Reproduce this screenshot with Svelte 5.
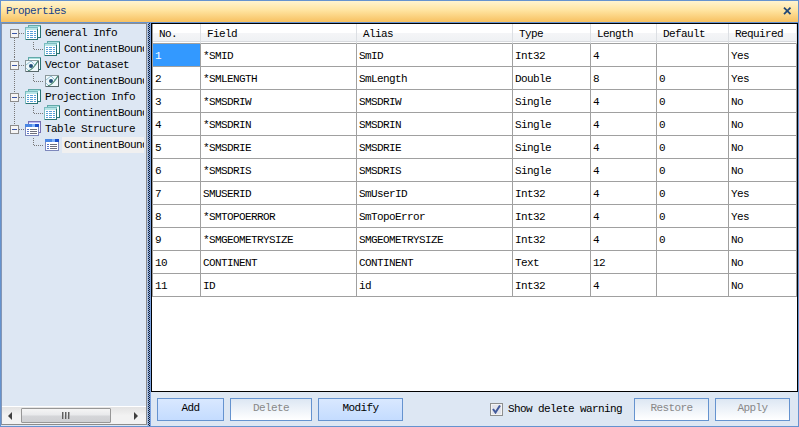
<script>
  const tree = [
    { label: 'General Info', icon: 'grid' },
    { label: 'Vector Dataset', icon: 'vector' },
    { label: 'Projection Info', icon: 'grid' },
    { label: 'Table Structure', icon: 'table', selected: true }
  ];
  const columns = ['No.', 'Field', 'Alias', 'Type', 'Length', 'Default', 'Required'];
  const rows = [
    ['1', '*SMID', 'SmID', 'Int32', '4', '', 'Yes'],
    ['2', '*SMLENGTH', 'SmLength', 'Double', '8', '0', 'Yes'],
    ['3', '*SMSDRIW', 'SMSDRIW', 'Single', '4', '0', 'No'],
    ['4', '*SMSDRIN', 'SMSDRIN', 'Single', '4', '0', 'No'],
    ['5', '*SMSDRIE', 'SMSDRIE', 'Single', '4', '0', 'No'],
    ['6', '*SMSDRIS', 'SMSDRIS', 'Single', '4', '0', 'No'],
    ['7', 'SMUSERID', 'SmUserID', 'Int32', '4', '0', 'Yes'],
    ['8', '*SMTOPOERROR', 'SmTopoError', 'Int32', '4', '0', 'Yes'],
    ['9', '*SMGEOMETRYSIZE', 'SMGEOMETRYSIZE', 'Int32', '4', '0', 'No'],
    ['10', 'CONTINENT', 'CONTINENT', 'Text', '12', '', 'No'],
    ['11', 'ID', 'id', 'Int32', '4', '', 'No']
  ];
  let warn = $state(true);
</script>

{#snippet icon(kind, stacked)}
  <svg class="icon" width="16" height="16" viewBox="0 0 16 16" shape-rendering="crispEdges">
    {#if kind === 'table'}
      {#if stacked}
        <rect x="3.5" y="0.5" width="12" height="11" fill="#f4f4ff" stroke="#7770b5" />
        <rect x="4" y="1" width="11" height="1" fill="#b9b9f4" />
      {/if}
      <g transform={stacked ? 'translate(0 1)' : 'translate(1 0)'}>
        <rect x="0.5" y="2.5" width="13" height="11" fill="#fff" stroke="#7d88bc" />
        <rect x="0" y="2" width="14" height="3" fill="#4a86e4" />
        <rect x="7" y="2" width="3" height="3" fill="#7fb2fa" />
        <rect x="10" y="2" width="4" height="3" fill="#1c50c8" />
        <path d="M2 7.5h2M2 9.5h2M2 11.5h2" stroke="#5c78c8" />
        <path d="M5 7.5h7M5 9.5h7M5 11.5h7" stroke="#6d6f7c" />
      </g>
    {:else}
      {#if kind === 'grid' || stacked}
        <rect x="3.5" y="0.5" width="12" height="12" fill="#f5ffff" stroke="#62a9a9" />
        <path d="M15.5 1v12M13 12.5h3" stroke="#2b7474" />
        <path d="M4 1.5h11" stroke="#a6dddd" />
      {/if}
      {#if kind === 'grid'}
        <rect x="0.5" y="2.5" width="12" height="12" fill="#fff" stroke="#7bbcc0" />
        <path d="M12.500 4v11M1 14.500h12" stroke="#2b7474" />
        <rect x="1" y="3" width="11" height="2" fill="#b7e5e6" />
        <path d="M2 6.5h2M5 6.5h3M9 6.5h2M2 8.5h2M5 8.5h3M9 8.5h2M2 10.5h2M5 10.5h3M9 10.5h2M2 12.5h2M5 12.5h3M9 12.5h2" stroke="#5aa0d8" />
      {:else}
        <g transform={stacked ? 'translate(0 0)' : 'translate(1 -1)'} shape-rendering="auto">
          <rect x="0.5" y="3.5" width="13" height="11" fill="#eff8fb" stroke="#8b989c" />
          <path d="M1 8l5-4 4 4 3-4M1 11l3 3" fill="none" stroke="#93c0d4" />
          <circle cx="6" cy="9" r="2" fill="#245078" />
          <path d="M3 14C7 13 10 9 13 4" fill="none" stroke="#4c8c74" stroke-width="1.2" />
          <path d="M13.500 4v11M1 14.500h13" stroke="#58686c" />
        </g>
      {/if}
    {/if}
  </svg>
{/snippet}

<div class="window">
  <header>
    <span>Properties</span>
    <svg width="9" height="8" viewBox="0 0 9 8"><path d="M1 .7l6.500 6.500M7.500 .7L1 7.200" stroke="#214777" stroke-width="1.8" /></svg>
  </header>
  <div class="body">
    <aside>
      <div class="tree">
        {#each tree as node, i}
          <div class="node">
            <svg class="branch" width="16" height="32" viewBox="0 0 16 32" shape-rendering="crispEdges">
              <path d={i === 0 ? 'M5.500 13V32' : i === 3 ? 'M5.500 0V5' : 'M5.500 0V32'} stroke="#777" stroke-dasharray="1 1" />
              <path d="M10 8.500h6" stroke="#777" stroke-dasharray="1 1" />
              <rect x="1.500" y="4.500" width="8" height="8" rx="1" fill="#f5f5f5" stroke="#8c8c8c" />
              <path d="M3 8.500h5" stroke="#3a56a8" />
            </svg>
            <div class="pair">
              <div class="line">{@render icon(node.icon, true)}<span class="label">{node.label}</span></div>
              <div class="line child">
                <svg width="11" height="16" viewBox="0 0 11 16" shape-rendering="crispEdges"><path d="M.5 1V9M1 8.500h10" fill="none" stroke="#777" stroke-dasharray="1 1" /></svg>
                {@render icon(node.icon, false)}<span class="label" class:selected={node.selected}>ContinentBound</span>
              </div>
            </div>
          </div>
        {/each}
      </div>
      <div class="scroll">
        <svg width="4" height="8" viewBox="0 0 4 8"><path d="M4 0v8L0 4z" fill="#404040" /></svg>
        <div class="thumb"><i></i><i></i><i></i></div>
        <svg class="right" width="4" height="8" viewBox="0 0 4 8"><path d="M0 0v8L4 4z" fill="#404040" /></svg>
      </div>
    </aside>
    <div class="splitter"></div>
    <main>
      <div class="sheet">
        <div class="row head">{#each columns as c}<div>{c}</div>{/each}</div>
        {#each rows as row, r}
          <div class="row">{#each row as v, c}<div class:active={r === 0 && c === 0}>{v}</div>{/each}</div>
        {/each}
      </div>
      <footer>
        <button class="add">Add</button>
        <button class="delete" disabled>Delete</button>
        <button class="modify">Modify</button>
        <label>
          <input type="checkbox" bind:checked={warn} />
          <span class="box">{#if warn}<svg width="9" height="9" viewBox="0 0 9 9"><path d="M1 4l2.500 3.500L8 .5" fill="none" stroke="#425a9c" stroke-width="2" /></svg>{/if}</span>
          <span>Show delete warning</span>
        </label>
        <button class="restore" disabled>Restore</button>
        <button class="apply" disabled>Apply</button>
      </footer>
    </main>
  </div>
</div>

<style>
  .window, .window * { box-sizing: border-box; }
  .window {
    width: 799px; height: 427px; overflow: hidden;
    border: 1px solid #6593cf; background: #dde7f3;
    font: 11px/16px "Liberation Mono", monospace; letter-spacing: -0.6px; color: #000;
    display: flex; flex-direction: column; white-space: nowrap;
  }
  header {
    height: 22px; flex: none; display: flex; align-items: center; justify-content: space-between;
    padding: 0 6px 2px 5px; color: #15428b;
    background: linear-gradient(#fff4d0, #ffe4a0 45%, #f7c161);
    border-bottom: 1px solid #6593cf;
  }
  .body { flex: 1; min-height: 0; display: flex; }
  aside {
    width: 146px; margin-bottom: 1px; border: 1px solid #8c8c8c; border-left-color: #8496b4;
    display: flex; flex-direction: column; overflow: hidden;
  }
  .tree { flex: 1; padding: 1px 0 0 7px; overflow: hidden; }
  .node { height: 32px; display: flex; }
  .branch { flex: none; }
  .line { display: flex; height: 16px; }
  .line svg { flex: none; }
  .child { padding-left: 8px; }
  .label { padding-left: 4px; height: 16px; line-height: 17px; }
  .child .label { padding-left: 2px; margin-left: 2px; width: 82px; overflow: hidden; }
  .selected { background: #f0f0f0; }
  .scroll {
    height: 18px; flex: none; display: flex; align-items: center; padding: 1px 8px 1px 6px;
    background: linear-gradient(#e3e3e3, #f2f2f2 50%); border-top: 1px solid #fff;
  }
  .thumb {
    width: 90px; height: 15px; margin-left: 9px; border: 1px solid #979797; border-radius: 1px;
    background: linear-gradient(#f5f5f5, #e8e9eb 48%, #d5d6d9 52%, #cfd0d3);
    display: flex; align-items: center; justify-content: center; gap: 1px;
  }
  .thumb i { width: 2px; height: 7px; background: #606060; border-right: 1px solid #aaa; }
  .right { margin-left: auto; }
  .splitter {
    width: 4px; background: repeating-conic-gradient(#172238 0 25%, #8eaee0 0 50%) 0 0 / 2px 2px;
    border-left: 1px solid #a9c0e2; border-right: 1px solid #7ba2e0;
  }
  main { flex: 1; min-width: 0; display: flex; flex-direction: column; }
  .sheet { height: 369px; border: 1px solid #000; background: #fff; }
  .row {
    display: grid; grid-template-columns: 48px 156px 156px 78px 66px 72px 68px; height: 23px;
    width: 645px; border-left: 1px solid #a0a0a0;
  }
  .row > div {
    border-right: 1px solid #a0a0a0; border-bottom: 1px solid #a0a0a0;
    padding-left: 2px; line-height: 24px; overflow: hidden;
  }
  .head { height: 20px; }
  .head > div {
    padding-left: 6px; line-height: 21px; border-right-color: #dcdfe3;
    background: linear-gradient(#fff 45%, #f4f5f7 50%, #eef0f3);
    box-shadow: inset 0 -1px #fff, inset 0 -2px #d8dade;
  }
  .row .active { background: #3399ff; color: #fff; }
  footer { flex: 1; display: flex; align-items: center; padding: 0 8px 0 6px; }
  button {
    font: inherit; letter-spacing: inherit; height: 23px; padding: 0 0 2px; margin: 0 6px 0 0;
    border: 1px solid #6593cf; background: linear-gradient(#d9e8ff, #c4dcff); color: #000;
  }
  button:disabled { color: #888; background: linear-gradient(#dde7f3, #fff); }
  .add { width: 67px; }
  .delete { width: 82px; }
  .modify { width: 85px; }
  label { margin-left: auto; margin-right: 12px; display: flex; align-items: center; }
  input { position: absolute; opacity: 0; }
  .box {
    width: 13px; height: 13px; margin-right: 5px; border: 1px solid #8e8f8f; background: #e2e4ec;
    box-shadow: inset 0 0 0 1px #f4f4f4; display: flex; align-items: center; justify-content: center;
  }
  .restore, .apply { width: 75px; }
  .apply { margin-right: 0; }
</style>
